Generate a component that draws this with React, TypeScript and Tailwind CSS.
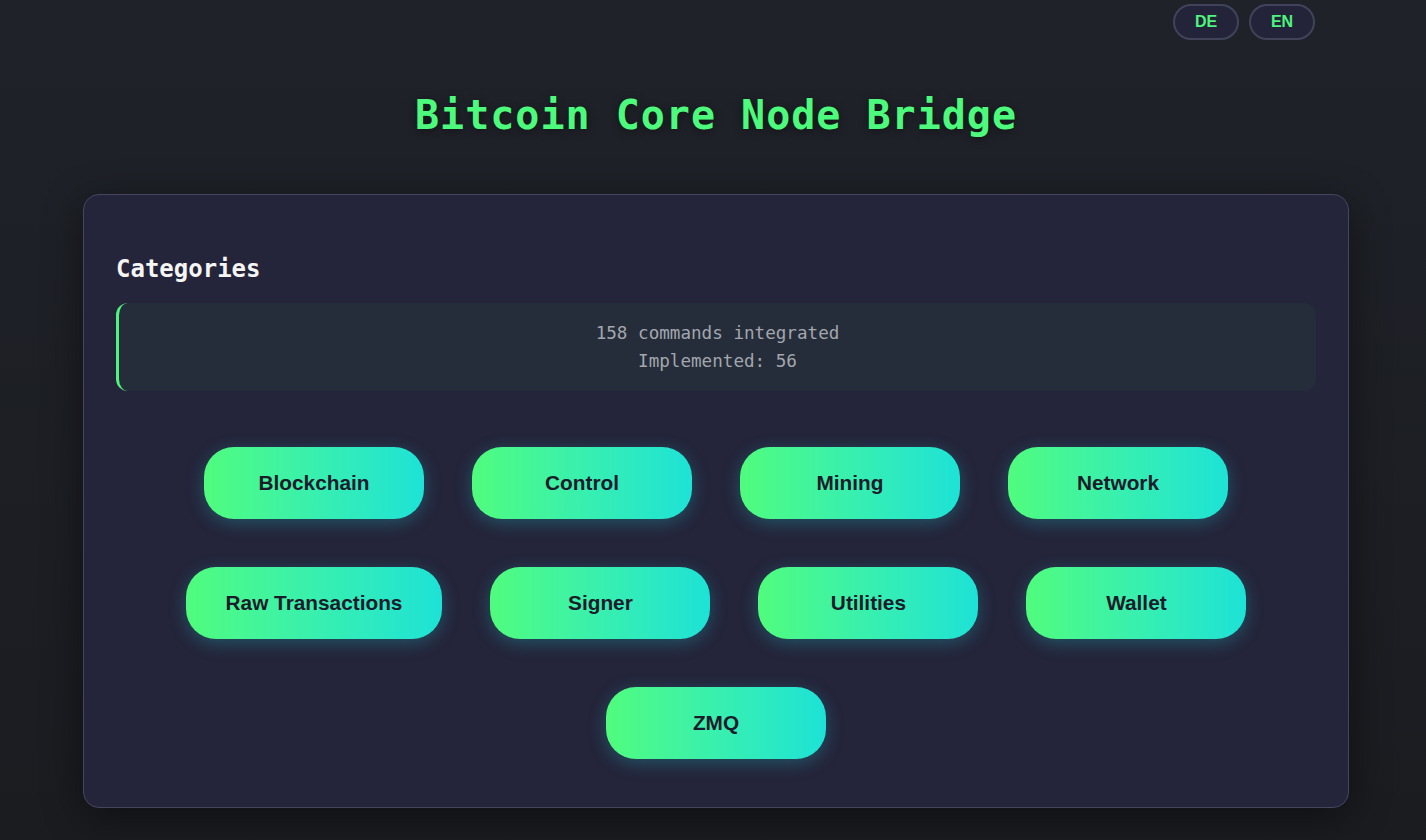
const categories = [
  "Blockchain",
  "Control",
  "Mining",
  "Network",
  "Raw Transactions",
  "Signer",
  "Utilities",
  "Wallet",
  "ZMQ",
];

const mono = "font-['DejaVu_Sans_Mono','Liberation_Mono',monospace]";
const sans = "font-['Liberation_Sans',Arial,sans-serif]";

export default function App() {
  return (
    <div className="min-h-[840px] bg-gradient-to-b from-[#1f2229] to-[#1a1c20] pl-[83px] pr-[77px]">
      <div className="flex justify-end gap-[10px] pt-[4px] pr-[34px]">
        {["DE", "EN"].map((l) => (
          <button
            key={l}
            type="button"
            className={`h-[36px] w-[66px] rounded-full border-2 border-[#41435a] bg-[#23233a] text-[16px] font-bold text-[#4ef57d] ${sans}`}
          >
            {l}
          </button>
        ))}
      </div>

      <h1
        className={`mt-[51px] text-center text-[40px] leading-[48px] font-bold tracking-[1px] text-[#4dfb7c] [text-shadow:0_2px_10px_rgba(0,0,0,0.45)] ${mono}`}
      >
        Bitcoin Core Node Bridge
      </h1>

      <div className="mt-[55px] rounded-[16px] border border-[#45465e] bg-[#24243a] px-[32px] pt-[60px] pb-[48px] shadow-[0_10px_40px_rgba(0,0,0,0.45)]">
        <h2 className={`text-[24px] leading-[28px] font-bold text-[#f5f5f5] ${mono}`}>Categories</h2>

        <div
          className={`mt-[20px] rounded-[12px] border-l-[3px] border-[#4ef57d] bg-[#252d3a] py-[16px] text-center text-[17.6px] leading-[28px] text-[#a3a6ad] ${mono}`}
        >
          <div>158 commands integrated</div>
          <div>Implemented: 56</div>
        </div>

        <div className="mt-[56px] flex flex-wrap justify-center gap-[48px]">
          {categories.map((c) => (
            <button
              key={c}
              type="button"
              className={`h-[72px] min-w-[220px] rounded-[30px] bg-gradient-to-r from-[#50fc7c] to-[#1de2d6] px-[40px] text-[20.8px] font-bold text-[#1b1b2b] shadow-[0_4px_18px_rgba(34,211,220,0.28)] ${sans}`}
            >
              {c}
            </button>
          ))}
        </div>
      </div>
    </div>
  );
}
